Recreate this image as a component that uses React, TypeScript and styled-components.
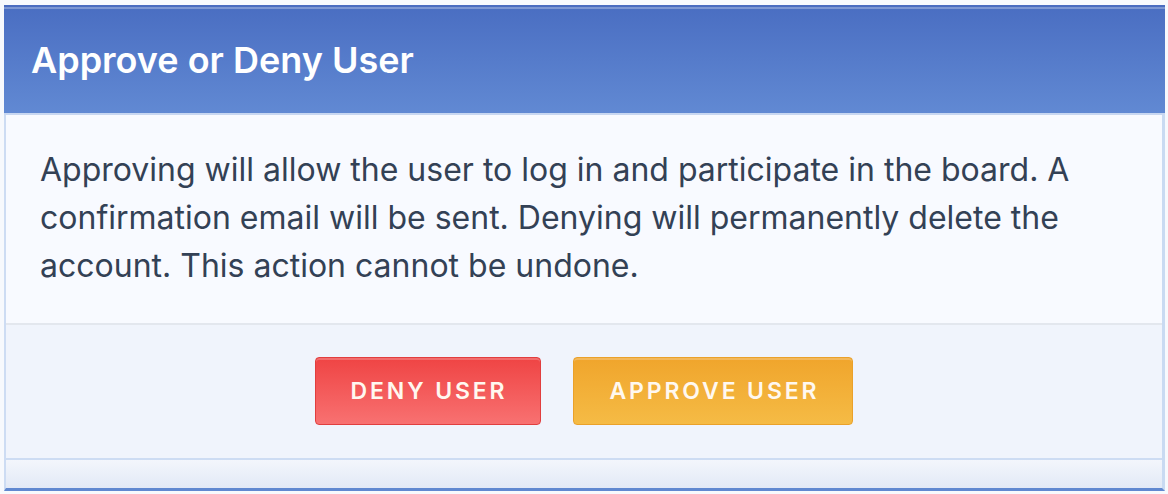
import styled, { createGlobalStyle } from 'styled-components'

const GlobalStyle = createGlobalStyle`
  html, body {
    margin: 0;
    padding: 0;
    background: #f7f9fd;
  }
  body {
    font-family: Inter, 'Noto Sans', 'Liberation Sans', sans-serif;
    -webkit-font-smoothing: antialiased;
  }
`

type ButtonTone = 'deny' | 'approve'

const tones = {
  deny: { top: '#ef4444', bottom: '#f87171', border: '#e13e3e' },
  approve: { top: '#f0a52c', bottom: '#f5bb45', border: '#eaa12a' },
}

const App = () => {
  return (
    <StyledPage>
      <GlobalStyle />
      <StyledPanel>
        <StyledHeader>
          <StyledTitle>Approve or Deny User</StyledTitle>
        </StyledHeader>

        <StyledBody>
          <StyledMessage>
            Approving will allow the user to log in and participate in the board. A confirmation
            email will be sent. Denying will permanently delete the account. This action cannot be
            undone.
          </StyledMessage>
        </StyledBody>

        <StyledFooter>
          <StyledActionButton tone='deny'>Deny User</StyledActionButton>
          <StyledActionButton tone='approve'>Approve User</StyledActionButton>
        </StyledFooter>

        <StyledBottomStrip />
      </StyledPanel>
    </StyledPage>
  )
}

export default App

const StyledPage = styled.div`
  padding: 5px 3px 4px 4px;
`
const StyledPanel = styled.section`
  display: flex;
  flex-direction: column;
  background: #f8faff;
  border-left: 2px solid #cddcf3;
  border-right: 3px solid #c9daf2;
  border-bottom: 3px solid #6088d0;
`
const StyledHeader = styled.header`
  display: flex;
  align-items: center;
  box-sizing: border-box;
  height: 110px;
  margin: 0 -3px 0 -2px;
  padding: 0 27px;
  background: linear-gradient(180deg, #4a6ec2 0%, #6189d3 100%);
  box-shadow: inset 0 2px 0 rgba(255, 255, 255, 0.28);
  border-top: 2px solid #4a6cc0;
  border-bottom: 2px solid #c8d7f1;
`
const StyledTitle = styled.h1`
  margin: 0;
  color: #ffffff;
  font-size: 36px;
  font-weight: 600;
  letter-spacing: 0;
`
const StyledBody = styled.div`
  padding: 31px 34px 33px;
  border-bottom: 2px solid #e3e7ee;
`
const StyledMessage = styled.p`
  margin: 0;
  color: #334155;
  font-size: 32px;
  line-height: 48px;
`
const StyledFooter = styled.footer`
  display: flex;
  justify-content: center;
  gap: 32px;
  padding: 32px 0 33px;
  background: #f0f4fc;
  border-bottom: 2px solid #cddcf3;
`
const StyledActionButton = styled.button<{ tone: ButtonTone }>`
  height: 68px;
  padding: 0 33px 0 35px;
  border: 1px solid ${({ tone }) => tones[tone].border};
  border-radius: 4px;
  background: linear-gradient(
    180deg,
    ${({ tone }) => tones[tone].top} 0%,
    ${({ tone }) => tones[tone].bottom} 100%
  );
  box-shadow: inset 0 2px 0 rgba(255, 255, 255, 0.22);
  color: #fff8f0;
  font-family: inherit;
  font-size: 23px;
  font-weight: 600;
  letter-spacing: 0.125em;
  text-transform: uppercase;
  cursor: pointer;
`
const StyledBottomStrip = styled.div`
  height: 28px;
  background: linear-gradient(180deg, #f3f6fc 0%, #e2e9f6 100%);
`
